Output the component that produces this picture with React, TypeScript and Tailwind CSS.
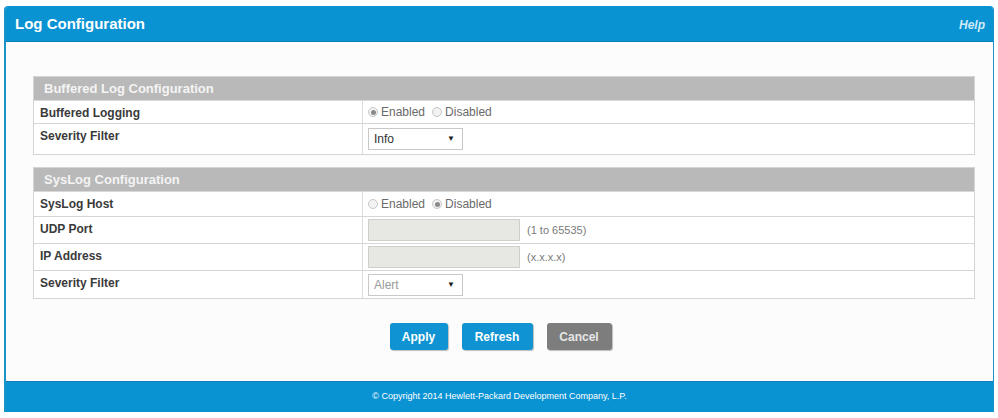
import React from "react"

function SectionHeader({ title }: { title: string }) {
  return (
    <div className="h-[24px] bg-[#b9b9b9] pl-[10px] flex items-center text-[13px] font-bold text-[#f4f4f4] border-b border-[#d8d8d8]">
      {title}
    </div>
  )
}

function Row({ label, children, h = "h-[26px]" }: { label: string; children: React.ReactNode; h?: string }) {
  return (
    <div className={`flex ${h} border-b border-[#d6d6d6] last:border-b-0`}>
      <div className="w-[329px] shrink-0 border-r border-[#dcdcdc] pl-[6px] pt-[3px] text-[12px] font-bold text-[#3a3a3a]">
        {label}
      </div>
      <div className="flex-1 pl-[5px] flex items-center">{children}</div>
    </div>
  )
}

function Radio({ checked, label }: { checked: boolean; label: string }) {
  return (
    <label className="flex items-center gap-[3px] mr-[7px] text-[12px] text-[#6a6a6a]">
      <span className="w-[10px] h-[10px] rounded-full border border-[#c8c8c8] bg-[#f2f2f2] flex items-center justify-center">
        {checked && <span className="w-[5px] h-[5px] rounded-full bg-[#8a8a8a]" />}
      </span>
      {label}
    </label>
  )
}

function Select({ value, dim }: { value: string; dim?: boolean }) {
  return (
    <div className="w-[95px] h-[22px] border border-[#c9c9c9] bg-white flex items-center justify-between px-[5px] text-[12px]">
      <span className={dim ? "text-[#9a9a9a]" : "text-[#333]"}>{value}</span>
      <span className="text-[8px] text-[#222] mr-[2px]">▼</span>
    </div>
  )
}

function TextBox({ hint }: { hint: string }) {
  return (
    <div className="flex items-center gap-[7px]">
      <div className="w-[152px] h-[22px] bg-[#e7e7e4] border border-[#cfcfcb]" />
      <span className="text-[11px] text-[#7a7a7a]">{hint}</span>
    </div>
  )
}

export default function App() {
  return (
    <div className="w-[998px] h-[418px] bg-white pt-[6px] pl-[4px] pr-[4px]" style={{ fontFamily: '"Liberation Sans", Arial, sans-serif' }}>
      <div className="w-[990px] rounded-t-[4px] border-l-2 border-r border-[#1a93c9] overflow-hidden bg-[#fcfcfc]">
        <div className="h-[36px] bg-[#0a93d3] flex items-center justify-between pl-[9px] pr-[8px] pt-[2px] border-b border-[#0c7fb4]">
          <span className="text-[15px] font-bold text-white">Log Configuration</span>
          <span className="text-[12px] font-bold italic text-[#cfeaf7]">Help</span>
        </div>

        <div className="pt-[34px] pl-[27px] pr-[18px]">
          <div className="border border-[#d4d4d4] bg-white">
            <SectionHeader title="Buffered Log Configuration" />
            <Row label="Buffered Logging" h="h-[23px]">
              <Radio checked label="Enabled" />
              <Radio checked={false} label="Disabled" />
            </Row>
            <Row label="Severity Filter" h="h-[30px]">
              <Select value="Info" />
            </Row>
          </div>

          <div className="mt-[12px] border border-[#d4d4d4] bg-white">
            <SectionHeader title="SysLog Configuration" />
            <Row label="SysLog Host" h="h-[25px]">
              <Radio checked={false} label="Enabled" />
              <Radio checked label="Disabled" />
            </Row>
            <Row label="UDP Port" h="h-[27px]">
              <TextBox hint="(1 to 65535)" />
            </Row>
            <Row label="IP Address" h="h-[27px]">
              <TextBox hint="(x.x.x.x)" />
            </Row>
            <Row label="Severity Filter" h="h-[27px]">
              <Select value="Alert" dim />
            </Row>
          </div>

          <div className="flex justify-center gap-[14px] pt-[24px] pb-[31px] pr-[7px]">
            <button className="w-[58px] h-[27px] rounded-[3px] bg-[#0f93d2] text-white text-[12px] font-bold shadow-[1px_1px_1px_rgba(0,0,0,0.25)]">Apply</button>
            <button className="w-[71px] h-[27px] rounded-[3px] bg-[#0f93d2] text-white text-[12px] font-bold shadow-[1px_1px_1px_rgba(0,0,0,0.25)]">Refresh</button>
            <button className="w-[65px] h-[27px] rounded-[3px] bg-[#7d7d7d] text-[#e6e6e6] text-[12px] font-bold shadow-[1px_1px_1px_rgba(0,0,0,0.25)]">Cancel</button>
          </div>
        </div>

        <div className="h-[31px] bg-[#0a93d3] flex items-center justify-center text-[9px] text-white border-t border-[#0c7fb4]">
          © Copyright 2014 Hewlett-Packard Development Company, L.P.
        </div>
      </div>
    </div>
  )
}
